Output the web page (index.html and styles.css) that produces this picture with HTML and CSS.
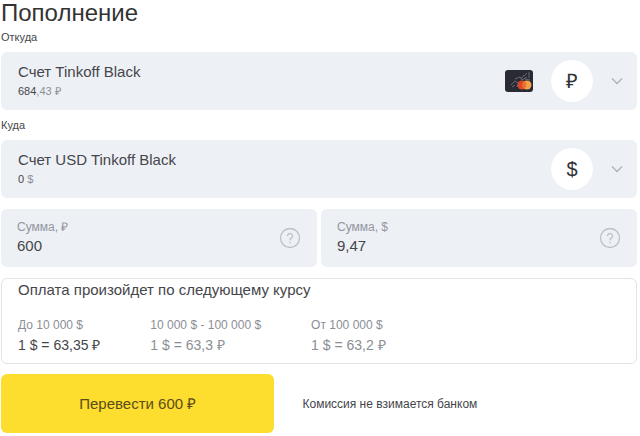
FILE: index.html
```html
<!DOCTYPE html>
<html lang="ru">
<head>
<meta charset="UTF-8" />
<meta name="viewport" content="width=device-width, initial-scale=1" />
<title>Пополнение</title>
<link rel="stylesheet" href="styles.css">
</head>
<body>
  <form class="transfer">
    <h1>Пополнение</h1>

    <label class="field-label" for="from">Откуда</label>
    <div class="account">
      <select id="from">
        <option>Счет Tinkoff Black</option>
      </select>
      <div class="balance">684<span>,43 ₽</span></div>
      <svg class="bank-card" width="28" height="22" viewBox="0 0 28 22">
        <rect width="28" height="22" rx="3" fill="#292a33"/>
        <path d="M6 15l4-4 3 2M10 9l5-2 2 3 5-3M19 6l3-3M24 2v6M12 17l2-5M20 9l5 1M7 17l3-2M16 9l3-4" fill="none" stroke="#686a72"/>
        <circle cx="17" cy="15" r="4.500" fill="#d9472b"/>
        <circle cx="22" cy="15" r="4.500" fill="#f0a24a"/>
        <path d="M19.500 11.300a4.500 4.500 0 0 1 0 7.400a4.500 4.500 0 0 1 0-7.400z" fill="#ee702f"/>
      </svg>
      <div class="currency">₽</div>
      <svg class="chevron" width="12" height="8" viewBox="0 0 12 8"><path d="M1 1.500l5 5 5-5"/></svg>
    </div>

    <label class="field-label" for="to">Куда</label>
    <div class="account">
      <select id="to">
        <option>Счет USD Tinkoff Black</option>
      </select>
      <div class="balance">0 <span>$</span></div>
      <div class="currency">$</div>
      <svg class="chevron" width="12" height="8" viewBox="0 0 12 8"><path d="M1 1.500l5 5 5-5"/></svg>
    </div>

    <div class="sums">
      <div class="sum">
        <div class="sum-text">
          <label for="sumRub">Сумма, ₽</label>
          <input type="text" id="sumRub" value="600" inputmode="decimal" />
        </div>
        <button type="button" class="help" aria-label="Подсказка">
          <svg width="22" height="22" viewBox="0 0 22 22"><circle cx="11" cy="11" r="9.500"/><path d="M8.500 9a2.500 2.500 0 1 1 3.800 2.100c-.9.600-1.300 1-1.300 2.100M11 14.800v1.500"/></svg>
        </button>
      </div>
      <div class="sum">
        <div class="sum-text">
          <label for="sumUsd">Сумма, $</label>
          <input type="text" id="sumUsd" value="9,47" inputmode="decimal" />
        </div>
        <button type="button" class="help" aria-label="Подсказка">
          <svg width="22" height="22" viewBox="0 0 22 22"><circle cx="11" cy="11" r="9.500"/><path d="M8.500 9a2.500 2.500 0 1 1 3.800 2.100c-.9.600-1.300 1-1.300 2.100M11 14.800v1.500"/></svg>
        </button>
      </div>
    </div>

    <section class="rates">
      <h2>Оплата произойдет по следующему курсу</h2>
      <table>
        <thead>
          <tr>
            <th>До 10 000 $</th>
            <th>10 000 $ - 100 000 $</th>
            <th>От 100 000 $</th>
          </tr>
        </thead>
        <tbody>
          <tr>
            <td class="current">1 $ = 63,35 ₽</td>
            <td>1 $ = 63,3 ₽</td>
            <td>1 $ = 63,2 ₽</td>
          </tr>
        </tbody>
      </table>
    </section>

    <div class="actions">
      <button type="submit" class="submit-btn">Перевести 600 ₽</button>
      <p>Комиссия не взимается банком</p>
    </div>
  </form>
</body>
</html>
```

FILE: styles.css
```css
* {
  box-sizing: border-box;
}
body {
  margin: 0;
  background: #fff;
  color: #45464b;
  font-family: "Liberation Sans", Arial, sans-serif;
}
.transfer {
  padding: 0 3px 3px 1px;
}
h1 {
  margin: 0;
  color: #333;
  font-size: 24px;
  font-weight: 400;
  line-height: 26px;
}
.field-label {
  display: block;
  padding: 4px 0 8px;
  font-size: 11px;
  line-height: 14px;
}
.account {
  display: grid;
  grid-template-columns: 1fr 28px 42px 12px;
  grid-template-rows: 20px 20px;
  column-gap: 18px;
  align-items: center;
  height: 58px;
  padding: 9px 14px 9px 17px;
  border-radius: 6px;
  background: #edf0f5;
}
.account + .field-label {
  padding-top: 8px;
}
select,
input {
  border: none;
  outline: none;
  background: none;
  color: inherit;
  font-family: inherit;
  font-size: 15px;
}
select {
  grid-area: 1 / 1 / 2 / -1;
  height: 20px;
  padding: 0;
  appearance: none;
  cursor: pointer;
}
.balance {
  grid-area: 2 / 1;
  font-size: 11px;
  line-height: 20px;
}
.balance span {
  color: #8b8f98;
}
.bank-card,
.currency,
.chevron {
  grid-row: 1 / 3;
  pointer-events: none;
}
.bank-card {
  grid-column: 2;
}
.currency {
  grid-column: 3;
  height: 42px;
  border-radius: 50%;
  background: #fff;
  color: #303136;
  font-size: 20px;
  line-height: 42px;
  text-align: center;
}
.chevron {
  grid-column: 4;
  fill: none;
  stroke: #b0b4bc;
  stroke-width: 1.5;
}
.sums {
  display: grid;
  grid-template-columns: 1fr 1fr;
  gap: 4px;
  margin: 11px 0;
}
.sum {
  display: flex;
  align-items: center;
  height: 58px;
  padding: 0 16px;
  border-radius: 6px;
  background: #edf0f4;
}
.sum-text {
  flex: 1;
  min-width: 0;
  padding-bottom: 3px;
}
.sum label {
  display: block;
  color: #9296a0;
  font-size: 12px;
  line-height: 18px;
}
.sum input {
  display: block;
  width: 100%;
  height: 20px;
  padding: 0;
}
.help {
  display: flex;
  padding: 0;
  border: none;
  background: none;
  cursor: pointer;
}
.help svg {
  fill: none;
  stroke: #bdc1c7;
  stroke-width: 1.3;
}
.rates {
  padding: 1px 16px 8px;
  border: 1px solid #e1e3e8;
  border-radius: 6px;
}
h2 {
  margin: 0 0 15px;
  font-size: 15px;
  font-weight: 400;
  line-height: 20px;
}
table {
  border-collapse: collapse;
  color: #8b8e95;
}
th,
td {
  padding: 0 50px 0 0;
  font-weight: 400;
  text-align: left;
  white-space: nowrap;
}
th {
  font-size: 12px;
  line-height: 20px;
}
td {
  font-size: 14px;
  line-height: 20px;
}
.current {
  color: #45464b;
}
.actions {
  display: flex;
  align-items: center;
  gap: 28px;
  margin-top: 10px;
}
.submit-btn {
  width: 43%;
  height: 59px;
  padding: 0 0 2px;
  border: none;
  border-radius: 6px;
  background: #fddd2d;
  color: #5a4c1c;
  font-family: inherit;
  font-size: 15px;
  cursor: pointer;
}
.actions p {
  margin: 0;
  font-size: 12px;
}
```
